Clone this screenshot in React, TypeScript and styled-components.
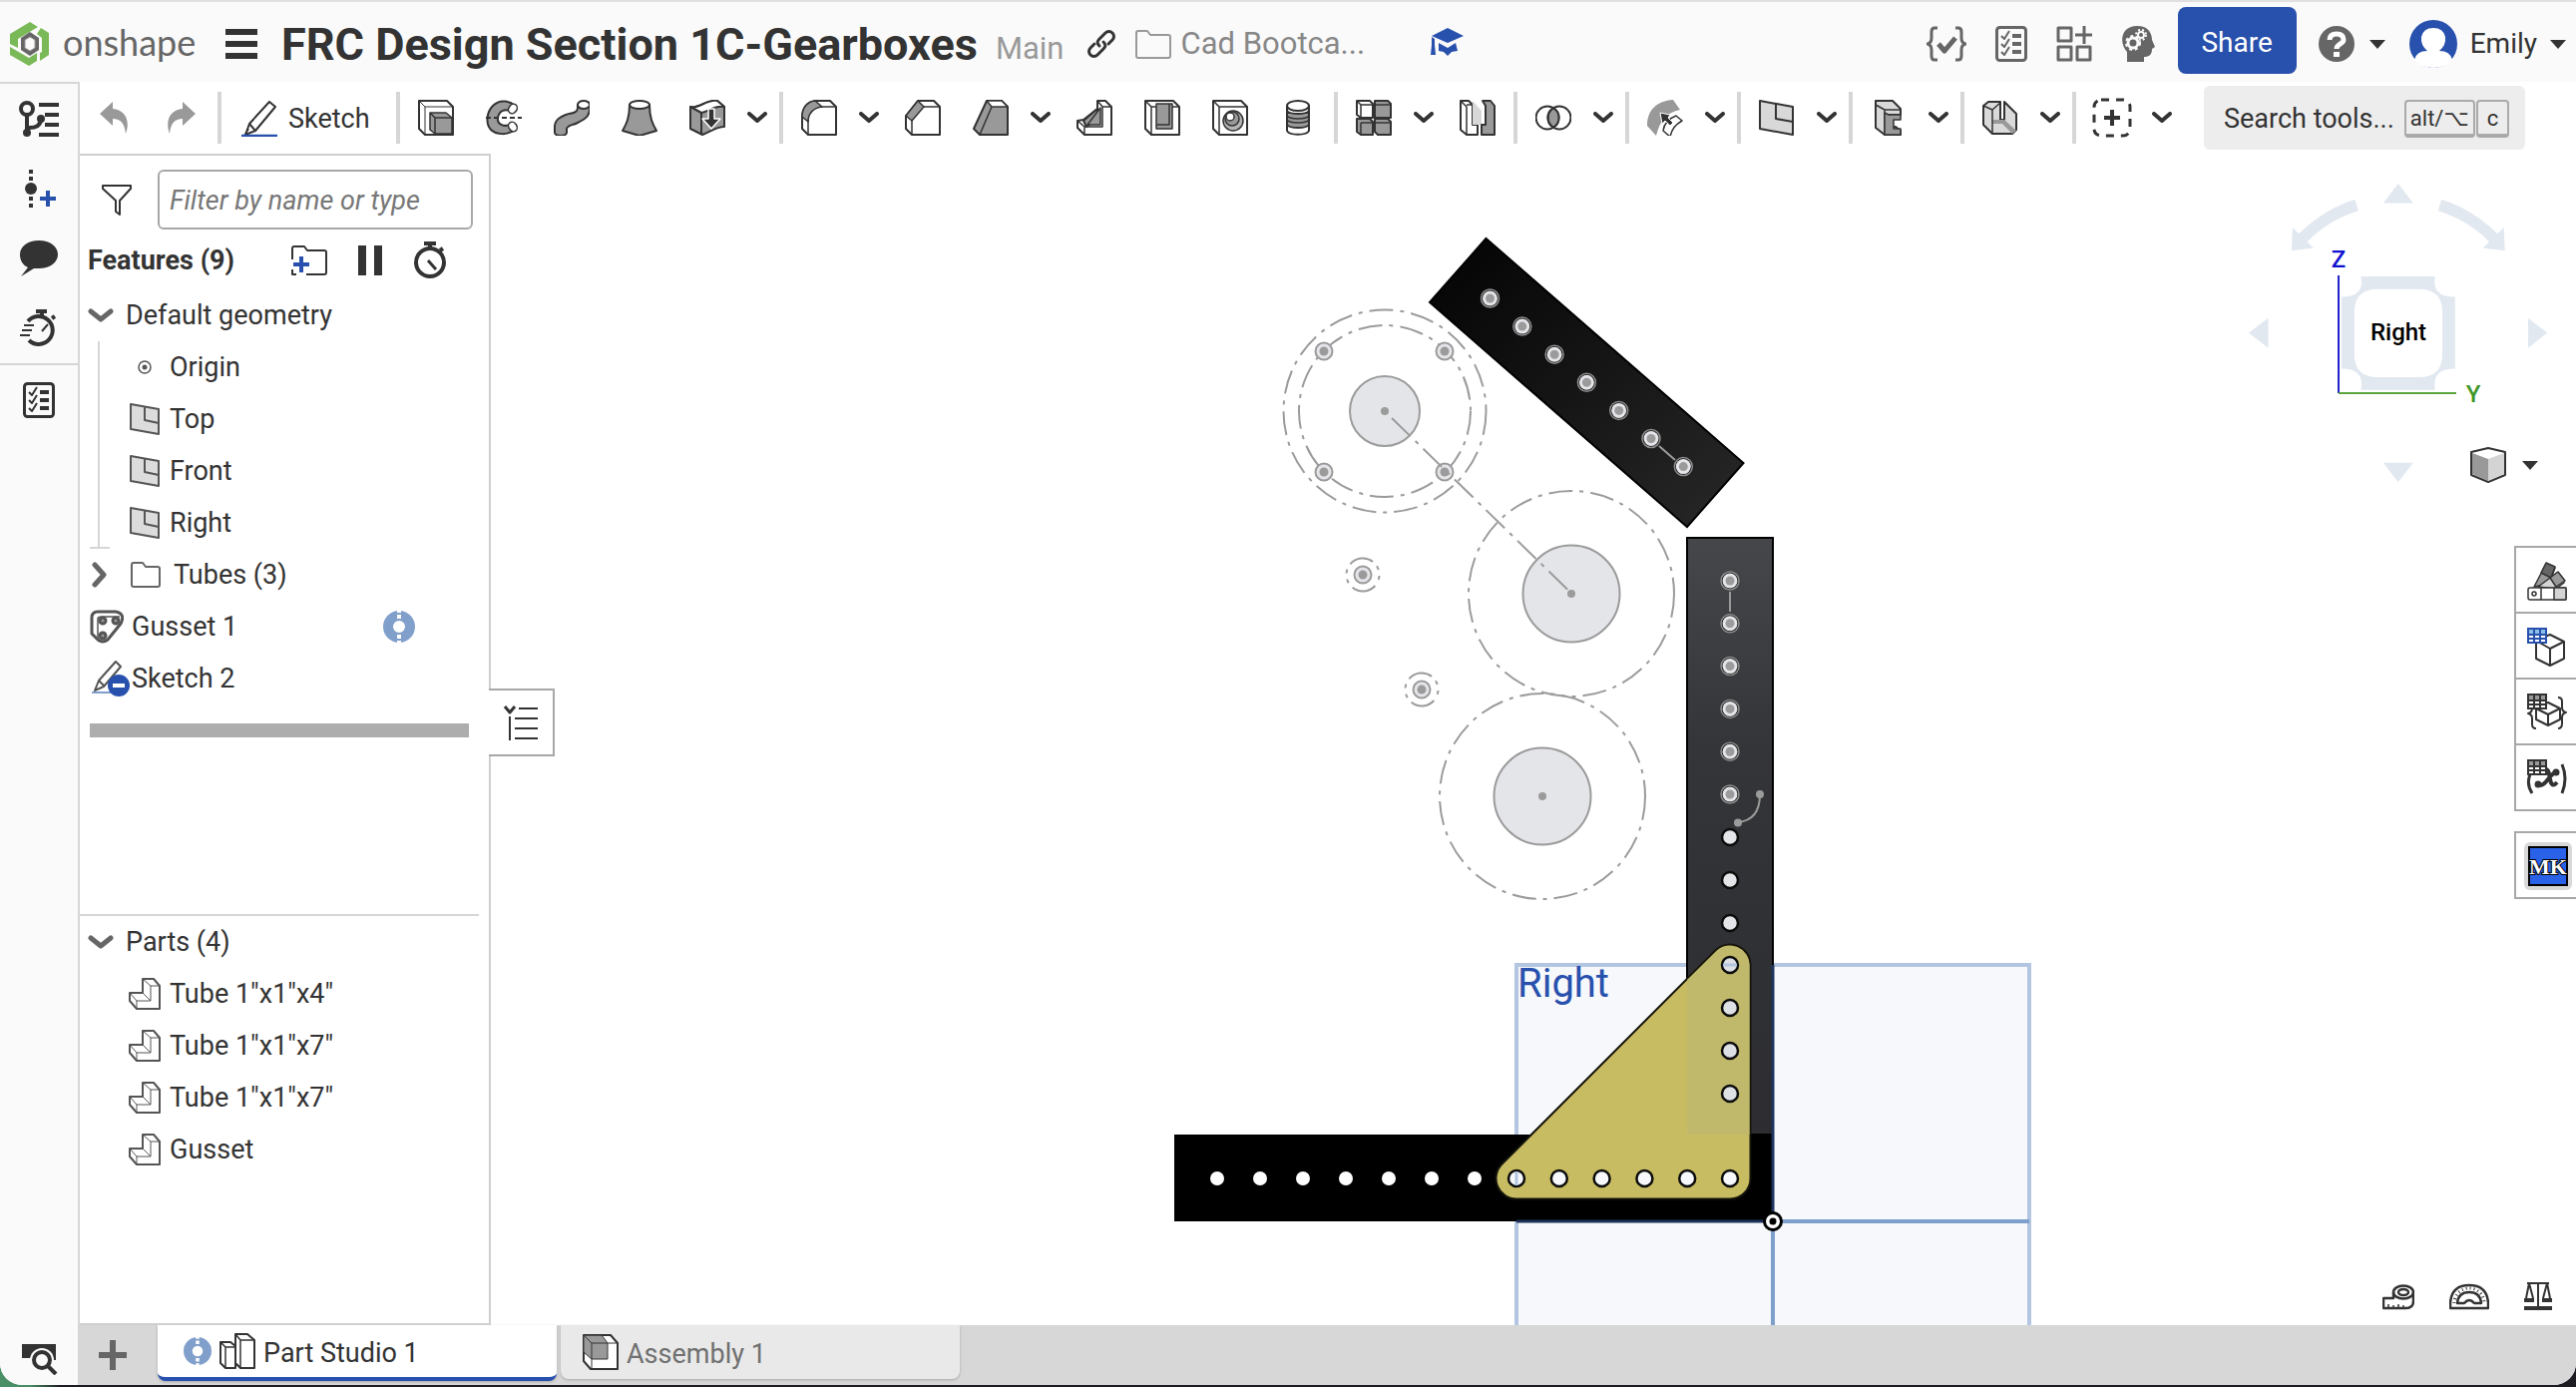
import React from "react";
import styled, { createGlobalStyle } from "styled-components";

const INK = "#333333";
const BLUE = "#2850ad";
const MID = "#999999";
const LINE = "#d6d6d6";

const GlobalStyle = createGlobalStyle`
  * { box-sizing: border-box; }
  html, body { margin: 0; background: linear-gradient(90deg, #4a8f66 0, #4a8f66 30px, #1c1c22 60px); }
  body { font-family: Roboto, "Liberation Sans", sans-serif; font-size: 27px; line-height: 32px; color: ${INK}; }
  button { font: inherit; color: inherit; background: none; border: 0; padding: 0; margin: 0; cursor: pointer; }
  svg { display: block; flex: none; }
`;

const Shell = styled.div`
  display: flex;
  flex-direction: column;
  height: calc(100vh - 2px);
  border-radius: 0 0 22px 22px;
  overflow: hidden;
  background: #fff;
`;

/* ---------- header ---------- */
const Header = styled.header`
  display: flex;
  align-items: center;
  height: 82px;
  flex: none;
  padding: 4px 10px 0;
  background: #fafafa;
  border-top: 2px solid #e0e0e0;
`;
const Brand = styled.a`
  display: flex;
  align-items: center;
  gap: 14px;
  width: 216px;
  color: #666;
  text-decoration: none;
  font-family: Lato, Roboto, sans-serif;
  font-size: 36px;
  line-height: 44px;
`;
const Wordmark = styled.span`
  padding-bottom: 4px;
`;
const Title = styled.h1`
  margin: 0 0 0 24px;
  padding-top: 2px;
  font-size: 45px;
  line-height: 52px;
  font-weight: 700;
  white-space: nowrap;
`;
const Branch = styled.span`
  margin: 10px 22px 0 18px;
  font-size: 31px;
  line-height: 36px;
  color: ${MID};
`;
const Project = styled.a`
  display: flex;
  align-items: center;
  gap: 10px;
  margin: 0 66px 0 19px;
  font-size: 31px;
  line-height: 36px;
  color: #888;
  text-decoration: none;
`;
const Spacer = styled.div`
  flex: 1;
`;
const HeaderTools = styled.div`
  display: flex;
  align-items: center;
  gap: 29px;
  margin-right: 23px;
`;
const ShareButton = styled.button`
  width: 119px;
  height: 67px;
  margin: 0 22px 7px 0;
  padding-top: 4px;
  border-radius: 8px;
  background: ${BLUE};
  color: #fff;
  font-size: 28px;
`;
const MenuButton = styled.button<{ $gap: number; $right?: number }>`
  display: flex;
  align-items: center;
  gap: ${(p) => p.$gap}px;
  margin-right: ${(p) => p.$right ?? 0}px;
  font-size: 28px;
`;

/* ---------- body ---------- */
const Body = styled.div`
  display: flex;
  flex: 1;
  min-height: 0;
`;
const Rail = styled.nav`
  display: flex;
  flex-direction: column;
  width: 80px;
  flex: none;
  background: #fafafa;
  border-top: 2px solid ${LINE};
  border-right: 2px solid ${LINE};
`;
const RailButton = styled.button<{ $ruled?: boolean; $last?: boolean }>`
  display: flex;
  align-items: center;
  justify-content: center;
  height: ${(p) => (p.$ruled ? 72 : 70)}px;
  border-top: ${(p) => (p.$ruled ? `2px solid ${LINE}` : "0")};
  margin-top: ${(p) => (p.$last ? "auto" : "0")};
  margin-bottom: ${(p) => (p.$last ? "-9px" : "0")};
`;
const Main = styled.main`
  display: flex;
  flex-direction: column;
  flex: 1;
  min-width: 0;
`;

/* ---------- toolbar ---------- */
const Toolbar = styled.div`
  display: flex;
  align-items: center;
  height: 72px;
  flex: none;
`;
const ToolButton = styled.button`
  display: flex;
  align-items: center;
  justify-content: center;
  width: 68px;
  height: 60px;
`;
const CaretButton = styled.button`
  display: flex;
  align-items: center;
  padding-left: 6px;
  width: 36px;
  height: 60px;
`;
const Separator = styled.span`
  width: 4px;
  height: 52px;
  margin: 0 2px;
  background: ${LINE};
`;
const SketchButton = styled.button`
  display: flex;
  align-items: center;
  gap: 11px;
  width: 171px;
  padding: 2px 0 0 18px;
`;
const SearchTools = styled.button`
  display: flex;
  align-items: center;
  width: 322px;
  height: 64px;
  margin: 0 0 0 22px;
  padding: 2px 0 0 20px;
  border-radius: 6px;
  background: #ededed;
  text-align: left;
`;
const Key = styled.kbd<{ $first?: boolean }>`
  height: 38px;
  margin-left: ${(p) => (p.$first ? 10 : 1)}px;
  padding: 0 ${(p) => (p.$first ? 4 : 9)}px;
  border: 2px solid #aaa;
  border-bottom-width: 4px;
  border-radius: 4px;
  font-family: Roboto, "DejaVu Sans", sans-serif;
  font-size: 22px;
  line-height: 34px;
`;

/* ---------- feature panel ---------- */
const Workspace = styled.div`
  display: flex;
  flex: 1;
  min-height: 0;
`;
const Panel = styled.aside`
  position: relative;
  display: flex;
  flex-direction: column;
  width: 412px;
  flex: none;
  border: 2px solid #cfcfcf;
  border-left: 0;
`;
const FilterRow = styled.label`
  display: flex;
  align-items: center;
  gap: 26px;
  margin-top: 14px;
  padding-left: 22px;
`;
const FilterInput = styled.input`
  width: 316px;
  height: 60px;
  padding: 2px 10px 0;
  border: 2px solid #a8a8a8;
  border-radius: 6px;
  font: italic 400 27px/32px Roboto, sans-serif;
  color: ${INK};
  &::placeholder { color: #777; opacity: 1; }
`;
const FeatureHead = styled.div`
  display: flex;
  align-items: center;
  height: 58px;
  margin-top: 2px;
  padding-left: 8px;
`;
const HeadTitle = styled.h2`
  margin: 0;
  width: 204px;
  font-size: 27px;
  line-height: 32px;
  font-weight: 700;
`;
const HeadIcons = styled.div`
  display: flex;
  align-items: center;
  gap: 31px;
`;
const Tree = styled.ul`
  list-style: none;
  margin: 0;
  padding: 0;
`;
const Row = styled.li<{ $indent: number; $gap: number }>`
  display: flex;
  align-items: center;
  gap: ${(p) => p.$gap}px;
  height: 52px;
  padding-left: ${(p) => p.$indent}px;
`;
const Branches = styled.ul`
  list-style: none;
  margin: 0 0 0 18px;
  padding: 0;
  border-left: 2px solid ${LINE};
  position: relative;
  &::after {
    content: "";
    position: absolute;
    left: -10px;
    bottom: 0;
    width: 20px;
    height: 2px;
    background: ${LINE};
  }
`;
const Slot = styled.span<{ $w: number }>`
  display: flex;
  justify-content: center;
  width: ${(p) => p.$w}px;
  flex: none;
`;
const RingSlot = styled.span`
  margin-left: auto;
  margin-right: 74px;
`;
const Rollback = styled.div`
  height: 14px;
  margin: 19px 20px 0 10px;
  background: #adadad;
`;
const Features = styled.section`
  height: 760px;
  flex: none;
`;
const Parts = styled.section`
  flex: 1;
  margin-right: 10px;
  border-top: 2px solid ${LINE};
`;
const Flyout = styled.button`
  position: absolute;
  left: 410px;
  top: 534px;
  display: flex;
  align-items: center;
  justify-content: center;
  width: 66px;
  height: 68px;
  border: 2px solid #a8a8a8;
  border-left: 0;
  background: #fff;
`;

/* ---------- canvas ---------- */
const Canvas = styled.div`
  position: relative;
  flex: 1;
  min-width: 0;
  overflow: hidden;
`;
const Drawing = styled.svg`
  width: 100%;
  height: 100%;
`;
const ViewCube = styled.div`
  position: absolute;
  top: 22px;
  right: 22px;
`;
const CubeMenu = styled.div`
  position: absolute;
  top: 294px;
  right: 38px;
`;
const SideDock = styled.div`
  position: absolute;
  top: 393px;
  right: 0;
  display: flex;
  flex-direction: column;
  width: 62px;
`;
const DockButton = styled.button<{ $apart?: boolean }>`
  display: flex;
  align-items: center;
  padding: 2px 0 0 ${(p) => (p.$apart ? 8 : 10)}px;
  height: 68px;
  margin-top: ${(p) => (p.$apart ? 22 : 0)}px;
  margin-bottom: ${(p) => (p.$apart ? 0 : -2)}px;
  border: 2px solid #a8a8a8;
  border-right: 0;
`;
const MkBadge = styled.span`
  display: flex;
  padding: 4px;
  border-radius: 6px;
  background: #d8d8d8;
`;
const Measure = styled.div`
  position: absolute;
  right: 24px;
  bottom: 15px;
  display: flex;
  align-items: flex-end;
  gap: 35px;
`;

/* ---------- tabs ---------- */
const TabBar = styled.div`
  display: flex;
  align-items: flex-start;
  height: 60px;
  flex: none;
  background: #d7d7d7;
`;
const AddTab = styled.button`
  display: flex;
  align-items: center;
  justify-content: center;
  width: 78px;
  height: 60px;
  padding-right: 12px;
`;
const Tab = styled.button<{ $active?: boolean }>`
  display: flex;
  align-items: center;
  gap: 8px;
  width: 400px;
  height: ${(p) => (p.$active ? 56 : 54)}px;
  margin-right: 4px;
  padding: ${(p) => (p.$active ? "0 0 0 26px" : "0 0 0 22px")};
  border-bottom: ${(p) => (p.$active ? `4px solid ${BLUE}` : "0")};
  border-radius: 0 0 8px 8px;
  background: ${(p) => (p.$active ? "#fff" : "#e9e9e9")};
  color: ${(p) => (p.$active ? INK : "#707070")};
  box-shadow: 0 1px 3px rgba(0, 0, 0, 0.22);
`;
const TabLabel = styled.span`
  padding-top: 4px;
`;

/* ---------- icons ---------- */
type IconProps = { w?: number; h?: number; children: React.ReactNode; sw?: number; color?: string };
const Icon = ({ w = 36, h = 36, children, sw = 2, color = INK }: IconProps) => (
  <svg width={w} height={h} viewBox={`0 0 ${w} ${h}`} fill="none" stroke={color} strokeWidth={sw} strokeLinejoin="round" aria-hidden="true">
    {children}
  </svg>
);

const Caret = () => (
  <Icon w={20} h={12} sw={4}><path d="M2 2l8 7 8-7" strokeLinecap="round" /></Icon>
);
const Tri = () => (
  <Icon w={16} h={9} sw={0}><path d="M0 0h16l-8 9z" fill={INK} /></Icon>
);

const tool: Record<string, React.ReactNode> = {
  extrude: (<><path d="M1 1h28l6 6v28H7l-6-6z" fill="#fff" /><path d="M1 1l6 6h28M7 7v28" strokeWidth="1" /><path d="M12 13h16l6 5v16H17l-5-4z" fill={MID} strokeWidth="1.5" /><path d="M12 13l5 5h17M17 18v16" strokeWidth="1.5" /></>),
  revolve: (<><path d="M29 6C24 1 14-1 7 6S0 25 5 30s17 6 24 0c3-3 0-8-4-6-6 4-14 1-13-6s8-10 13-6c4 1 7-3 4-6z" fill={MID} /><ellipse cx="27" cy="9" rx="4" ry="5" fill="#fff" transform="rotate(35 27 9)" strokeWidth="1.5" /><ellipse cx="27" cy="27" rx="4" ry="5" fill="#fff" transform="rotate(-35 27 27)" strokeWidth="1.5" /><path d="M0 18h36" strokeDasharray="5 3" /></>),
  sweep: (<><path d="M24 5v3c0 6-7 5-12 7S0 20 1 29v4c1 4 11 4 12 0v-4c1-4 5-3 11-6s12-6 12-14V5z" fill={MID} /><ellipse cx="30" cy="5" rx="6" ry="4" fill="#fff" /></>),
  loft: (<><path d="M8 5C8 18 5 24 1 31l17 5 17-5C31 24 28 18 28 5z" fill={MID} /><ellipse cx="18" cy="5" rx="10" ry="4" fill="#fff" /></>),
  thicken: (<><path d="M1 7c8 3 16-8 27-6l7 6v20c-8 0-14 5-22 8L1 29z" fill={MID} /><path d="M1 7c8 3 16-8 27-6l7 6c-10-2-15 5-23 6z" fill="#fff" /><path d="M12 13v22" /><path d="M19 9h6v10h6l-9 10-9-10h6z" fill={INK} stroke="#fff" strokeWidth="1.5" /></>),
  fillet: (<><path d="M14 1h15l6 6v28H7l-6-6V18C1 8 6 2 14 1z" fill="#fff" /><path d="M14 1l7 6C12 8 7 14 7 22l-6-5C1 8 6 2 14 1z" fill={MID} strokeWidth="1.5" /><path d="M7 20v15M20 7h15" strokeWidth="1.5" /></>),
  chamfer: (<><path d="M13 1h16l6 6v28H7l-6-6V16z" fill="#fff" /><path d="M13 1l6 6L7 21l-6-5z" fill={MID} strokeWidth="1.5" /><path d="M7 20v15M19 7h16" strokeWidth="1.5" /></>),
  draft: (<><path d="M14 1h15l6 6v28H7l-6-6z" fill={MID} /><path d="M14 1h15l6 6H19z" fill="#fff" strokeWidth="1.5" /><path d="M19 7L7 35" strokeWidth="1.5" /></>),
  rib: (<><path d="M21 1h8l6 6v28H8l-7-7v-7l6-1L21 9z" fill="#fff" /><path d="M21 9v10L10 27l-3-6z" fill={MID} /><path d="M21 1l5 6h9M26 7v20H8v8M1 21l7 6" strokeWidth="1.5" /><path d="M24 8v17H11z" fill={MID} strokeWidth="1.5" /></>),
  shell: (<><path d="M1 1h28l6 6v28H7l-6-6z" fill="#fff" /><path d="M1 1l6 6h28M7 7v28" strokeWidth="1.5" /><path d="M12 4h16v25H12z" fill={MID} strokeWidth="1.5" /><path d="M12 25h13V4" strokeWidth="1.5" /></>),
  hole: (<><path d="M1 1h28l6 6v28H7l-6-6z" fill="#fff" /><path d="M1 1l6 6h28M7 7v28" strokeWidth="1.5" /><circle cx="21" cy="21" r="10" fill="#b5b5b5" strokeWidth="1.5" /><circle cx="20" cy="19" r="7" fill={MID} strokeWidth="1.5" /><circle cx="18" cy="17" r="4" fill="#fff" strokeWidth="1.5" /></>),
  thread: (<><path d="M7 6v25c2 5 20 5 22 0V6z" fill="#fff" /><path d="M7 11c3 4 19 4 22 0v14c-3 4-19 4-22 0z" fill={MID} /><ellipse cx="18" cy="6" rx="11" ry="5" fill="#fff" /><path d="M7 16c3 4 19 4 22 0M7 20c3 4 19 4 22 0" strokeWidth="1.5" /></>),
  pattern: (<><path d="M1 1h13l3 3v14H5l-4-3z" fill="#fff" /><path d="M19 1h13l3 3v14H19zM1 19h13l3 3v13H5l-4-3zM19 19h13l3 3v13H22l-3-3z" fill={MID} /><path d="M1 1l4 4h12M5 5v13M19 5h16M5 23h12M5 23v12M19 23h16" strokeWidth="1.5" /></>),
  mirror: (<><path d="M1 1h8l4 4v20h5v10H7l-6-5z" fill="#fff" /><path d="M1 1l6 6v28M7 5h6" strokeWidth="1.5" /><path d="M13 1l9 10v14h-9z" fill="#d8d8d8" stroke="none" /><path d="M23 1h8l4 5v29H22V25h4V6z" fill={MID} /></>),
  boolean: (<><circle cx="12" cy="18" r="11.5" /><path d="M18 8.2A11.5 11.5 0 0 1 18 27.8A11.5 11.5 0 0 1 18 8.2z" fill={MID} /><circle cx="24" cy="18" r="11.5" /></>),
  move: (<><path d="M0 26C0 10 10 1 26 0l7 10C20 13 13 20 9 36z" fill={MID} stroke="none" /><path d="M16 31c1-8 5-12 13-15l6 5c-7 4-10 8-12 16z" fill="#fff" strokeWidth="1.5" /><path d="M13 13l10 2-2 3 5 5-3 3-5-5-3 3z" fill={INK} stroke="#fff" strokeWidth="1" /></>),
  plane: (<><path d="M1 1l33 6v28L1 29z" fill="#d8d8d8" /><path d="M17 4v15l17 3" /></>),
  frame: (<><path d="M5 1h17l8 8v6H18v12h7l5 4v4H14L5 28z" fill="#d8d8d8" /><path d="M5 5l9 5h16M14 10v25" strokeWidth="1.5" /><path d="M18 15h12v5h-7v9h7v6H14V13z" fill={MID} strokeWidth="1.5" /></>),
  sheet: (<><path d="M1 6l5-4h12v18h4V2l12 12v16l-4 4H10l-9-9z" fill="#dadada" /><path d="M10 20h12l12 11-4 3-10-10H10z" fill={MID} stroke="none" /><path d="M1 6l9 4v24M18 3l-8 7M22 2v18" strokeWidth="1.5" /></>),
};

const ToolIcon = ({ name }: { name: string }) => <Icon>{tool[name]}</Icon>;

const CustomFeature = () => (
  <Icon w={40} h={40} sw={3}>
    <rect x="2" y="2" width="36" height="36" rx="7" strokeDasharray="8 7" />
    <path d="M20 12v16M12 20h16" strokeWidth="4" />
  </Icon>
);
const Pencil = () => (
  <Icon>
    <path d="M28 1l6 5-20 24-10 4 4-11zM8 23l6 7M4 33l3-5" />
    <path d="M0 35h36" stroke={BLUE} strokeWidth="2.5" />
  </Icon>
);
const Undo = ({ flip }: { flip?: boolean }) => (
  <Icon w={28} h={32} sw={0}>
    <path d={flip ? "M15 0l13 12-13 12v-7C7 17 3 22 2 32-3 18 3 8 15 7z" : "M13 0L0 12l13 12v-7c8 0 12 5 13 15C31 18 25 8 13 7z"} fill={MID} />
  </Icon>
);
const Checklist = ({ color }: { color?: string }) => (
  <Icon w={32} h={36} sw={3} color={color}>
    <rect x="1.5" y="1.5" width="29" height="33" rx="3" />
    <path d="M6 10l3 3 5-8M6 18l3 3 5-8M6 26l3 3 5-8" strokeWidth="2" />
    <path d="M17 10h9M17 18h9M17 26h9" strokeWidth="4" />
  </Icon>
);
const Folder = ({ w = 30, h = 26, color = "#666" }: { w?: number; h?: number; color?: string }) => (
  <Icon w={w} h={h} color={color}><path d={`M1 3q0-2 2-2h9l3 4h${w - 18}q2 0 2 2v${h - 10}q0 2-2 2H3q-2 0-2-2z`} /></Icon>
);
const PlaneIcon = () => (
  <Icon w={30} h={32} color="#555"><path d="M1 1l28 5v25L1 26z" fill="#dcdcdc" /><path d="M15 4v13l14 3" /></Icon>
);
const PartIcon = () => (
  <Icon w={32} h={32} color="#555"><path d="M14 1h11l6 7v23H8l-7-8v-8h13z" fill="#fff" /><path d="M1 15l7 8h14l-8-8M22 23V8h9M22 8l-8-7M8 23v8" strokeWidth="1" /></Icon>
);
const Ring = ({ s }: { s: number }) => (
  <svg width={s} height={s} viewBox="0 0 32 32" aria-hidden="true">
    <circle cx="16" cy="16" r="11" fill="none" stroke="#809fca" strokeWidth="10" />
    <path d="M14 0h4v2h-4zM14 4h4v4h-4zM14 24h4v4h-4zM14 30h4v2h-4z" fill="#fff" />
  </svg>
);
const Stopwatch = () => (
  <Icon w={34} h={38} sw={4}><circle cx="17" cy="21" r="14" /><path d="M17 6V2M11 2h12M27 9l3-2" /><path d="M15 19l8 9" strokeWidth="3" /></Icon>
);
const Table = ({ c, top }: { c: string; top: string }) => (
  <g stroke="none"><path d="M0 0h20v16H0z" fill={c} /><path d="M2 2h4v4H2zM8 2h4v4H8zM14 2h4v4h-4z" fill={top} /><path d="M2 8h4v2H2zM8 8h4v2H8zM14 8h4v2h-4zM2 12h4v2H2zM8 12h4v2H8zM14 12h4v2h-4z" fill="#fff" /></g>
);

/* ---------- model ---------- */
const DASH = "24 7 4 7";
const SKETCH = "#9b9b9b";
const Gear = ({ x, y, r, d }: { x: number; y: number; r: number; d: number }) => (
  <g stroke={SKETCH} strokeWidth="2" fill="none">
    <circle cx={x} cy={y} r={r} strokeDasharray={DASH} />
    <circle cx={x} cy={y} r={d} fill="#e4e5e9" />
    <circle cx={x} cy={y} r="4" fill={SKETCH} stroke="none" />
  </g>
);
const Bolt = ({ x, y, dark }: { x: number; y: number; dark?: boolean }) => (
  <g>
    {dark && <circle cx={x} cy={y} r="9" fill="#111" stroke="#8d8d8d" strokeWidth="1.5" />}
    <circle cx={x} cy={y} r={dark ? 7.5 : 8.5} fill="#e4e5e9" stroke={dark ? "none" : SKETCH} strokeWidth="2" />
    <circle cx={x} cy={y} r="4.5" fill={SKETCH} />
  </g>
);
const Hole = ({ x, y, fill = "#e4e5e9" }: { x: number; y: number; fill?: string }) => (
  <circle cx={x} cy={y} r="8" fill={fill} stroke="#0c0c0c" strokeWidth="2.5" />
);
const seven = [0, 1, 2, 3, 4, 5, 6];

const Model = () => (
  <Drawing role="img" aria-label="Gearbox model, right view">
    <defs>
      <linearGradient id="upper" x1="0" y1="0" x2="1" y2="1"><stop offset="0" stopColor="#030303" /><stop offset="1" stopColor="#282828" /></linearGradient>
      <linearGradient id="upright" x1="0" y1="0" x2="0" y2="1"><stop offset="0" stopColor="#45474a" /><stop offset="0.35" stopColor="#333538" /><stop offset="1" stopColor="#2d2d31" /></linearGradient>
    </defs>
    <g transform="translate(-492 -154)">
      <path d="M1520 967h514v540h-514z" fill="#f6f8fb" stroke="#b3c5e0" strokeWidth="4" />
      <path d="M1489.5 239L1747.500 464 1691 528 1433 303z" fill="url(#upper)" stroke="#000" strokeWidth="2" />
      <path d="M1691 539h86v598h-86z" fill="url(#upright)" stroke="#000" strokeWidth="2" />
      <path d="M1177 1137h600v87h-600z" fill="#000" />
      <path d="M1778 1224h256" stroke="#7f9fcb" strokeWidth="4" />
      <path d="M1777 1224v200" stroke="#7f9fcb" strokeWidth="4" />
      <path d="M1777 967v257M1520 1224h257" stroke="#1d335c" strokeWidth="3" />

      {seven.map((i) => <circle key={i} cx={1220 + i * 43} cy="1181" r="7" fill="#fff" />)}
      <path d="M1719.500 952.500A20.500 20.500 0 0 1 1754.500 967V1181A20.500 20.500 0 0 1 1734 1201.500H1520A20.500 20.500 0 0 1 1505.500 1166.500z" fill="#c8bc62" stroke="#15150c" strokeWidth="2" />
      <path d="M1691 982l29.500-29A20 20 0 0 1 1753.500 967v170h-62.500z" fill="#c0b96c" />
      {[0, 1, 2, 3, 4, 5].map((i) => <Hole key={i} x={1520 + i * 42.8} y={1181} fill="#f6f8fb" />)}
      {[967, 1010, 1053, 1096].map((y) => <Hole key={y} x={1734} y={y} fill="#dde0e5" />)}
      {[839, 882, 925].map((y) => <Hole key={y} x={1734} y={y} />)}
      <path d="M1520 1174v14M1727 967h14" stroke="#b3c5e0" strokeWidth="3" />

      {seven.map((i) => <Bolt key={i} dark x={1493.5 + i * 32.3} y={299 + i * 28.1} />)}
      {[0, 1, 2, 3, 4, 5].map((i) => <Bolt key={i} dark x={1734} y={582 + i * 42.8} />)}
      <path d="M1663 447l16 14M1734 593v20M1764 796q0 26-22 28" stroke={SKETCH} strokeWidth="2" fill="none" />
      <circle cx="1764" cy="796" r="4" fill={SKETCH} />
      <circle cx="1742" cy="824.500" r="4" fill={SKETCH} />

      <Gear x={1388} y={412} r={101.5} d={35} />
      <circle cx="1388" cy="412" r="86" fill="none" stroke={SKETCH} strokeWidth="2" strokeDasharray={DASH} />
      <Gear x={1575} y={595} r={103} d={48.5} />
      <Gear x={1546} y={798} r={103} d={48.5} />
      {[[1327, 352], [1448, 352], [1327, 473], [1448, 473]].map(([x, y]) => <Bolt key={`${x}-${y}`} x={x} y={y} />)}
      {[[1366, 576], [1425, 691]].map(([x, y]) => (
        <g key={x}><Bolt x={x} y={y} /><circle cx={x} cy={y} r="16.500" fill="none" stroke={SKETCH} strokeWidth="2" strokeDasharray="25 6 4 6 4 7" transform={`rotate(-140 ${x} ${y})`} /></g>
      ))}
      <path d="M1395 419L1575 594.500" stroke={SKETCH} strokeWidth="2" strokeDasharray="26 7 4 7" />

      <circle cx="1777" cy="1224" r="8.500" fill="#fff" stroke="#000" strokeWidth="3" />
      <circle cx="1777" cy="1224" r="3.500" fill="#000" />
      <text x="1521" y="999" fontSize="40" fill={BLUE}>Right</text>
    </g>
  </Drawing>
);

const Cube = () => (
  <svg width="310" height="310" viewBox="0 0 310 310" aria-hidden="true">
    <g transform="translate(-50 -16) scale(0.333)" fill="#e2e8f0">
      <path d="M612 72l-45 59h90zM567 912h90l-45 59zM162 521l59-44v90zM1061 521l-58-44v90z" />
      <path d="M482 120l10 34q-90 28-154 93l19 19-66 8 3-70 19 19q78-76 169-103zM742 120l-10 34q90 28 154 93l-19 19 66 8-3-70-19 19q-78-76-169-103z" />
      <path fillRule="evenodd" d="M500 351h223q-12 62 60 62v216q-72 0-60 64H500q12-64-59-64V413q71 0 59-62zM550 390q-70 0-70 70v125q0 70 70 70h125q70 0 70-70V460q0-70-70-70z" />
    </g>
    <path d="M94 100v118" stroke="#2222cc" strokeWidth="2" />
    <path d="M94 218h118" stroke="#5aa53c" strokeWidth="2" />
    <text x="154" y="165" textAnchor="middle" fontSize="24" fontWeight="500" fill="#000">Right</text>
    <text x="94" y="92" textAnchor="middle" fontSize="24" fontWeight="500" fill="#1010d0">Z</text>
    <text x="229" y="227" textAnchor="middle" fontSize="24" fontWeight="500" fill="#3f9626">Y</text>
  </svg>
);

type ToolEntry = string | "|" | "v";
const TOOLS: ToolEntry[] = [
  "extrude", "revolve", "sweep", "loft", "thicken", "v", "|",
  "fillet", "v", "chamfer", "draft", "v", "rib", "shell", "hole", "thread", "|",
  "pattern", "v", "mirror", "|", "boolean", "v", "|", "move", "v", "|",
  "plane", "v", "|", "frame", "v", "|", "sheet", "v", "|",
];

export default function App() {
  return (
    <>
      <GlobalStyle />
      <Shell>
        <Header>
          <Brand href="#">
            <Icon w={39} h={44} sw={0}>
              <path d="M20 0l8 5-20 12v9l-8-4V12zM31 6l8 5v22l-9 6v-8l2-1V16l-5-4zM0 25l19 11 8-5v8l-8 5L0 33z" fill="#7ab957" />
              <path d="M20 10l9 6v12l-9 6-9-6V16z" fill="#666" /><path d="M20 15l5 3v8l-5 3-5-3v-8z" fill="#fafafa" stroke="#999" strokeWidth="1" />
            </Icon>
            <Wordmark>onshape</Wordmark>
          </Brand>
          <button aria-label="Menu"><Icon w={32} h={30} sw={6}><path d="M0 3h32M0 15h32M0 27h32" /></Icon></button>
          <Title>FRC Design Section 1C-Gearboxes</Title>
          <Branch>Main</Branch>
          <button aria-label="Copy link">
            <Icon w={30} h={30} sw={3}><path d="M13 17c-3-3-2-5 0-7l6-6c2-2 5-2 7 0s2 5 0 7l-4 4M17 13c3 3 2 5 0 7l-6 6c-2 2-5 2-7 0s-2-5 0-7l4-4" strokeLinecap="round" /></Icon>
          </button>
          <Project href="#"><Folder w={36} h={29} color={MID} />Cad Bootca...</Project>
          <button aria-label="Learning center">
            <Icon w={33} h={32} sw={0}><path d="M17 0l16 8-16 7L1 8zM8 15l9 5 8-5 2 8-6 1-4 4-4-4-5-1zM1 9l3 2v6l1 10H0l1-10z" fill={BLUE} /></Icon>
          </button>
          <Spacer />
          <HeaderTools>
            <button aria-label="Checks"><Icon w={40} h={36} sw={3} color="#666"><path d="M11 2H8Q5 2 5 6v6q0 5-4 6 4 1 4 6v6q0 4 3 4h3M29 2h3q3 0 3 4v6q0 5 4 6-4 1-4 6v6q0 4-3 4h-3" /><path d="M12 18l6 7 11-13" strokeWidth="5" /></Icon></button>
            <button aria-label="Tasks"><Checklist color="#666" /></button>
            <button aria-label="App store"><Icon w={36} h={36} sw={3} color="#666"><path d="M2 2h13v13H2zM2 21h13v13H2zM21 21h13v13H21zM28 0v18M19 9h17" /></Icon></button>
            <button aria-label="Advisor"><Icon w={34} h={36} sw={0}><path d="M6 36V26C-2 18-1 0 16 0c12 0 15 8 15 14l3 7-3 2c0 6-3 8-8 8v5z" fill="#666" /><circle cx="12" cy="17" r="5" fill="none" stroke="#fafafa" strokeWidth="3" /><circle cx="12" cy="17" r="7" fill="none" stroke="#fafafa" strokeWidth="2" strokeDasharray="3 3" /><circle cx="20" cy="9" r="3" fill="none" stroke="#fafafa" strokeWidth="2" /><circle cx="20" cy="9" r="5" fill="none" stroke="#fafafa" strokeWidth="2" strokeDasharray="2 2" /></Icon></button>
          </HeaderTools>
          <ShareButton>Share</ShareButton>
          <MenuButton $gap={15} $right={24} aria-label="Help">
            <Icon w={36} h={36} sw={0}><circle cx="18" cy="18" r="18" fill="#666" /><path d="M11 14q0-6 7-6t7 6c0 4-7 4-7 9" stroke="#fff" strokeWidth="5" /><path d="M15 26h6v5h-6z" fill="#fff" /></Icon>
            <Tri />
          </MenuButton>
          <MenuButton $gap={13}>
            <Icon w={48} h={48} sw={0}><circle cx="24" cy="24" r="24" fill={BLUE} /><path d="M5 40q2-9 13-9-7-6-6-14Q14 8 24 8t12 9q1 8-6 14 11 0 13 9-7 8-19 8T5 40z" fill="#fff" /></Icon>
            Emily <Tri />
          </MenuButton>
        </Header>

        <Body>
          <Rail>
            <RailButton aria-label="Versions"><Icon w={40} h={36} sw={4}><circle cx="8" cy="8" r="6" /><circle cx="8" cy="32" r="4" fill={INK} stroke="none" /><circle cx="22" cy="18" r="4" fill={INK} stroke="none" /><path d="M8 14v18M8 27q14 1 14-9M20 4h20M26 14h14M26 24h14M20 34h20" /></Icon></RailButton>
            <RailButton aria-label="Insert"><Icon w={34} h={38} sw={4}><path d="M9 0v11M9 27v11" strokeDasharray="4 3" /><circle cx="9" cy="19" r="6" fill={INK} stroke="none" /><path d="M26 21v16M18 29h16" stroke={BLUE} /></Icon></RailButton>
            <RailButton aria-label="Comments"><Icon w={40} h={36} sw={0}><path d="M20 0c11 0 19 6 19 14s-8 14-19 14h-5L2 36l7-9C4 25 1 20 1 14 1 6 9 0 20 0z" fill={INK} /></Icon></RailButton>
            <RailButton aria-label="History"><Icon w={38} h={38} sw={4}><path d="M8 12a14 14 0 1 1 1 19M22 6V2M16 2h11M32 9l3-2" /><path d="M22 22l6-7M4 16h10M2 21h10M0 26h10" strokeWidth="2" /></Icon></RailButton>
            <RailButton $ruled aria-label="Properties"><Checklist /></RailButton>
            <RailButton $last aria-label="Search tabs"><Icon w={38} h={32} sw={4}><path d="M2 1h34v16h-6a10 10 0 0 0-17-2H2z" fill={INK} stroke="none" /><circle cx="22" cy="17" r="12" fill="#fafafa" stroke="none" /><circle cx="22" cy="17" r="8" /><path d="M28 23l8 8" /></Icon></RailButton>
          </Rail>

          <Main>
            <Toolbar>
              <ToolButton aria-label="Undo"><Undo /></ToolButton>
              <ToolButton aria-label="Redo"><Undo flip /></ToolButton>
              <Separator />
              <SketchButton><Pencil />Sketch</SketchButton>
              <Separator />
              {TOOLS.map((t, i) =>
                t === "|" ? <Separator key={i} /> :
                t === "v" ? <CaretButton key={i} aria-label="More"><Caret /></CaretButton> :
                <ToolButton key={i} aria-label={t}><ToolIcon name={t} /></ToolButton>
              )}
              <ToolButton aria-label="Custom features"><CustomFeature /></ToolButton>
              <CaretButton aria-label="More"><Caret /></CaretButton>
              <SearchTools>Search tools...<Key $first>alt/⌥</Key><Key>c</Key></SearchTools>
            </Toolbar>

            <Workspace>
              <Panel>
                <Features>
                  <FilterRow>
                    <Icon w={30} h={32} sw={2}><path d="M1 2h28v3L18 17v14l-4-3V17L1 5z" /></Icon>
                    <FilterInput placeholder="Filter by name or type" aria-label="Filter" />
                  </FilterRow>
                  <FeatureHead>
                    <HeadTitle>Features (9)</HeadTitle>
                    <HeadIcons>
                      <button aria-label="New folder"><Icon w={36} h={30}><path d="M1 14V3q0-2 2-2h10l3 4h17q2 0 2 2v20q0 2-2 2H15M1 24v5h4" /><path d="M10 11v16M2 19h16" stroke={BLUE} strokeWidth="4" /></Icon></button>
                      <button aria-label="Pause"><Icon w={24} h={30} sw={8}><path d="M4 0v30M20 0v30" /></Icon></button>
                      <button aria-label="Timings"><Stopwatch /></button>
                    </HeadIcons>
                  </FeatureHead>
                  <Tree>
                    <Row $indent={8} $gap={12}><Icon w={26} h={14} sw={5} color="#666"><path d="M3 3l10 8L23 3" strokeLinecap="round" /></Icon>Default geometry</Row>
                    <Branches>
                      <Row $indent={29} $gap={9}><Slot $w={32}><Icon w={14} h={14} color="#555"><circle cx="7" cy="7" r="6" strokeWidth="1.500" /><circle cx="7" cy="7" r="2.500" fill="#555" stroke="none" /></Icon></Slot>Origin</Row>
                      {["Top", "Front", "Right"].map((n) => <Row key={n} $indent={29} $gap={9}><Slot $w={32}><PlaneIcon /></Slot>{n}</Row>)}
                    </Branches>
                    <Row $indent={2} $gap={12}><Slot $w={36}><Icon w={16} h={26} sw={5} color="#666"><path d="M3 3l9 10-9 10" strokeLinecap="round" /></Icon></Slot><Slot $w={32}><Folder /></Slot>Tubes (3)</Row>
                    <Row $indent={10} $gap={8}>
                      <Icon w={34} h={34} color="#555" sw={3}><path d="M8 2h18q10 2 5 12L18 30q-5 4-10 0l-6-6V8q0-6 6-6z" fill="#fff" /><path d="M8 30V9q0-2 4-2h18" strokeWidth="1.500" /><circle cx="13" cy="11" r="3" fill={MID} /><circle cx="26" cy="11" r="3" fill={MID} /><circle cx="13" cy="26" r="3" fill={MID} /></Icon>
                      Gusset 1<RingSlot><Ring s={32} /></RingSlot>
                    </Row>
                    <Row $indent={12} $gap={2}>
                      <Icon w={38} h={38} color="#555"><path d="M24 2l5 5-17 20-9 4 4-10zM7 21l5 5" /><path d="M0 33h20" stroke="#809fca" /><circle cx="27" cy="26" r="11" fill={BLUE} stroke="none" /><path d="M21 26h12" stroke="#fff" strokeWidth="4" /></Icon>
                      Sketch 2
                    </Row>
                  </Tree>
                  <Rollback />
                </Features>
                <Parts>
                  <Tree>
                    <Row $indent={8} $gap={12}><Icon w={26} h={14} sw={5} color="#666"><path d="M3 3l10 8L23 3" strokeLinecap="round" /></Icon>Parts (4)</Row>
                    {['Tube 1"x1"x4"', 'Tube 1"x1"x7"', 'Tube 1"x1"x7"', "Gusset"].map((n, i) => <Row key={i} $indent={49} $gap={9}><PartIcon />{n}</Row>)}
                  </Tree>
                </Parts>
                <Flyout aria-label="Toggle feature list"><Icon w={38} h={38}><path d="M3 3l5 6 5-6" strokeWidth="3" /><path d="M8 13v24M17 5h19M13 15h23M13 25h23M13 35h23" /></Icon></Flyout>
              </Panel>

              <Canvas>
                <Model />
                <ViewCube><Cube /></ViewCube>
                <CubeMenu>
                  <MenuButton $gap={16} aria-label="View options">
                    <Icon w={36} h={36}><path d="M1 5l17-4 17 4v23l-17 7-17-7z" fill="#fff" /><path d="M2 6l16 6v22L2 27z" fill={MID} stroke="none" /><path d="M34 6l-16 6v22l16-7z" fill="#d4d4d4" stroke="none" /></Icon>
                    <Tri />
                  </MenuButton>
                </CubeMenu>
                <SideDock>
                  <DockButton aria-label="Appearances"><Icon w={42} h={40} sw={1.5}><path d="M8 26L20 3l9 4-6 16z" fill={MID} /><path d="M15 12l5-10 9 4-4 11z" fill="#666" /><path d="M12 26l19-14 7 10-8 6z" fill="#d4d4d4" /><path d="M24 17l8-6 7 9-9 6z" fill={MID} /><rect x="2" y="27" width="38" height="12" rx="2" fill="#fff" /><path d="M28 27h12v12H28z" fill="#d4d4d4" /><path d="M15 27v12" /><circle cx="8" cy="33" r="2" /></Icon></DockButton>
                  <DockButton aria-label="Configurations"><Icon w={42} h={40} sw={2}><path d="M10 13l14-5 14 7v17l-14 7-14-7zM10 14l14 8 14-7M24 22v17" fill="#fff" /><g transform="translate(1 1)"><Table c={BLUE} top="#8cc0ea" /></g></Icon></DockButton>
                  <DockButton aria-label="Custom tables"><Icon w={42} h={40} sw={2}><path d="M10 14l12-4 12 6v11l-12 6-12-6zM10 16l12 6 12-6M22 22v11" /><path d="M10 36q-4 0-4-4v-6q0-4-4-5 4-1 4-5M32 5q4 0 4 4v6q0 4 4 5-4 1-4 5v6q0 5-4 5" /><g transform="translate(1 1)"><Table c={INK} top={MID} /></g></Icon></DockButton>
                  <DockButton aria-label="Variables"><Icon w={42} h={40} sw={4}><path d="M17 12c6-4 6 4 7 9s3 8 7 3M31 14c-8 0-10 14-18 13" /><circle cx="30" cy="14" r="3.500" fill={INK} stroke="none" /><circle cx="12" cy="26" r="3.500" fill={INK} stroke="none" /><path d="M6 35q-6-9-2-19M36 6q6 14 0 29" strokeWidth="3" /><g transform="translate(1 1)"><Table c={INK} top={MID} /></g></Icon></DockButton>
                  <DockButton $apart aria-label="MK panel"><MkBadge><svg width="40" height="40" viewBox="0 0 40 40" aria-hidden="true"><rect x="1" y="1" width="38" height="38" fill="#2962e8" stroke="#000" strokeWidth="2" /><text x="20" y="28" textAnchor="middle" fontFamily="Liberation Serif, serif" fontWeight="700" fontSize="22" fill="#fff" stroke="#000" strokeWidth="2" paintOrder="stroke">MK</text></svg></MkBadge></DockButton>
                </SideDock>
                <Measure>
                  <button aria-label="Tape measure"><Icon w={32} h={26} sw={2.5}><path d="M11 8v6H1v10h22q8 0 8-7V8" /><ellipse cx="21" cy="8" rx="10" ry="6.500" /><ellipse cx="21" cy="8" rx="5" ry="3" /><path d="M6 24v-4M11 24v-3M16 24v-4M21 24v-3" strokeWidth="1.500" /></Icon></button>
                  <button aria-label="Protractor"><Icon w={40} h={27} sw={2.5}><path d="M1 25v-5Q2 2 20 2t19 18v5zM8 20Q9 9 20 9t12 11h-7q-5-6-10 0z" /><path d="M5 20A15 15 0 0 1 35 20" strokeWidth="3" strokeDasharray="1 3" /></Icon></button>
                  <button aria-label="Mass properties"><Icon w={28} h={28} sw={2}><path d="M3 1h22M14 1v24M5 1L2 16M5 1l4 15M23 1l-4 15M23 1l3 15" /><path d="M0 16h10v4H0zM18 16h10v4H18zM0 24h28v4H0z" fill={INK} stroke="none" /></Icon></button>
                </Measure>
              </Canvas>
            </Workspace>

            <TabBar>
              <AddTab aria-label="Add tab"><Icon w={28} h={30} sw={6} color="#666"><path d="M14 0v30M0 15h28" /></Icon></AddTab>
              <Tab $active>
                <Ring s={28} />
                <Icon><path d="M1 9h10l5 4v22H6l-5-5zM16 1h12l7 6v28H21l-5-5z" fill="#fff" /><path d="M1 9l5 5h10M6 14v21M16 1l5 6h14M21 7v28" strokeWidth="1.500" /></Icon>
                <TabLabel>Part Studio 1</TabLabel>
              </Tab>
              <Tab>
                <Icon><path d="M1 1h27l7 8v26H8l-7-8z" fill="#fff" /><path d="M1 1h18l6 8v16H9L1 18z" fill={MID} strokeWidth="1" /><path d="M1 1l8 8h26M9 9v26M1 1h27l7 8" strokeWidth="1" /></Icon>
                <TabLabel>Assembly 1</TabLabel>
              </Tab>
            </TabBar>
          </Main>
        </Body>
      </Shell>
    </>
  );
}
